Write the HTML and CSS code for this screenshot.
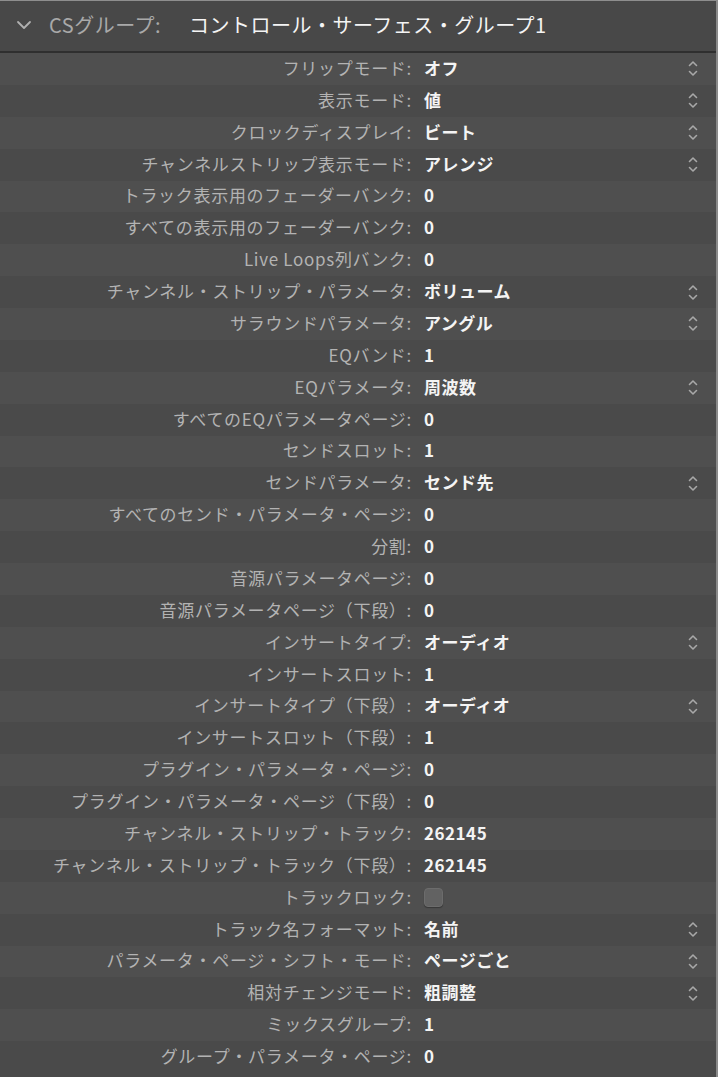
FILE: index.html
```html
<!DOCTYPE html>
<html lang="ja">
<head>
    <meta charset="UTF-8">
    <title>CSグループ</title>
    <link rel="stylesheet" href="styles.css">
</head>
<body>
    <div class="inspector">
        <div class="group-header">
            <svg class="disclosure" width="16" height="10" viewBox="0 0 16 10">
                <path d="M2 2 L8 8 L14 2" fill="none" stroke="#b0b0b0" stroke-width="1.8" stroke-linecap="round" stroke-linejoin="round"/>
            </svg>
            <span class="group-label">CSグループ:</span>
            <span class="group-name">コントロール・サーフェス・グループ1</span>
        </div>

        <div id="paramList" class="param-list">
            <!-- rows are built below -->
        </div>
    </div>

    <script>
        // [label, value, popup?]
        const params = [
            ['フリップモード', 'オフ', true],
            ['表示モード', '値', true],
            ['クロックディスプレイ', 'ビート', true],
            ['チャンネルストリップ表示モード', 'アレンジ', true],
            ['トラック表示用のフェーダーバンク', '0'],
            ['すべての表示用のフェーダーバンク', '0'],
            ['Live Loops列バンク', '0'],
            ['チャンネル・ストリップ・パラメータ', 'ボリューム', true],
            ['サラウンドパラメータ', 'アングル', true],
            ['EQバンド', '1'],
            ['EQパラメータ', '周波数', true],
            ['すべてのEQパラメータページ', '0'],
            ['センドスロット', '1'],
            ['センドパラメータ', 'センド先', true],
            ['すべてのセンド・パラメータ・ページ', '0'],
            ['分割', '0'],
            ['音源パラメータページ', '0'],
            ['音源パラメータページ（下段）', '0'],
            ['インサートタイプ', 'オーディオ', true],
            ['インサートスロット', '1'],
            ['インサートタイプ（下段）', 'オーディオ', true],
            ['インサートスロット（下段）', '1'],
            ['プラグイン・パラメータ・ページ', '0'],
            ['プラグイン・パラメータ・ページ（下段）', '0'],
            ['チャンネル・ストリップ・トラック', '262145'],
            ['チャンネル・ストリップ・トラック（下段）', '262145'],
            ['トラックロック', null],
            ['トラック名フォーマット', '名前', true],
            ['パラメータ・ページ・シフト・モード', 'ページごと', true],
            ['相対チェンジモード', '粗調整', true],
            ['ミックスグループ', '1'],
            ['グループ・パラメータ・ページ', '0']
        ];

        const stepper = `
            <svg class="stepper" width="10" height="17" viewBox="0 0 10 17">
                <path d="M1.5 5.5 L5 2 L8.5 5.5 M1.5 11.5 L5 15 L8.5 11.5" fill="none" stroke="#a8a8a8" stroke-width="1.6" stroke-linecap="round" stroke-linejoin="round"/>
            </svg>`;

        document.getElementById('paramList').innerHTML = params.map(([label, value, popup]) => `
            <div class="param-row">
                <div class="param-label">${label}:</div>
                <div class="param-value">
                    ${value === null ? '<span class="checkbox"></span>' : value}
                </div>
                <div class="param-control">${popup ? stepper : ''}</div>
            </div>
        `).join('');
    </script>
</body>
</html>
```

FILE: styles.css
```css
:root {
    --bg-header: #484848;
    --row-light: #4f4f4f;
    --row-dark: #4a4a4a;
    --text-label: #b3b3b3;
    --text-value: #f4f4f4;
}

* {
    margin: 0;
    padding: 0;
    box-sizing: border-box;
}

body {
    font-family: "Noto Sans CJK JP", "Noto Sans", sans-serif;
    background: var(--row-dark);
    width: 718px;
    height: 1077px;
    overflow: hidden;
}

.inspector {
    width: 718px;
    height: 1077px;
    border-top: 1px solid #8e8e8e;
    border-right: 2px solid #8a8a8a;
    background: var(--row-dark);
    overflow: hidden;
}

.group-header {
    display: flex;
    align-items: center;
    height: 52px;
    padding-left: 16px;
    padding-bottom: 3px;
    background: var(--bg-header);
    border-bottom: 2px solid #2f2f2f;
    font-size: 20px;
    letter-spacing: 0.5px;
}

.disclosure {
    margin-right: 17px;
}

.group-label {
    color: #a9a9a9;
    width: 140px;
}

.group-name {
    color: var(--text-value);
}

.param-list {
    display: flex;
    flex-direction: column;
}

.param-row {
    display: flex;
    align-items: center;
    height: 31.88px;
    font-size: 17px;
    background: var(--row-light);
}

.param-row:nth-child(even) {
    background: var(--row-dark);
}

.param-label {
    width: 412px;
    text-align: right;
    color: var(--text-label);
    white-space: nowrap;
    letter-spacing: 0.7px;
    padding-bottom: 3px;
}

.param-value {
    flex: 1;
    padding-left: 12px;
    color: var(--text-value);
    font-weight: 700;
    letter-spacing: 0.5px;
    display: flex;
    align-items: center;
    padding-bottom: 3px;
}

.param-control {
    width: 40px;
    padding-right: 18px;
    display: flex;
    justify-content: flex-end;
}

.checkbox {
    display: inline-block;
    width: 19px;
    height: 19px;
    border-radius: 4px;
    background: #626262;
    border: 1px solid #6c6c6c;
    box-shadow: 0 1px 1px rgba(0,0,0,0.3);
    margin-top: 3px;
}
```
